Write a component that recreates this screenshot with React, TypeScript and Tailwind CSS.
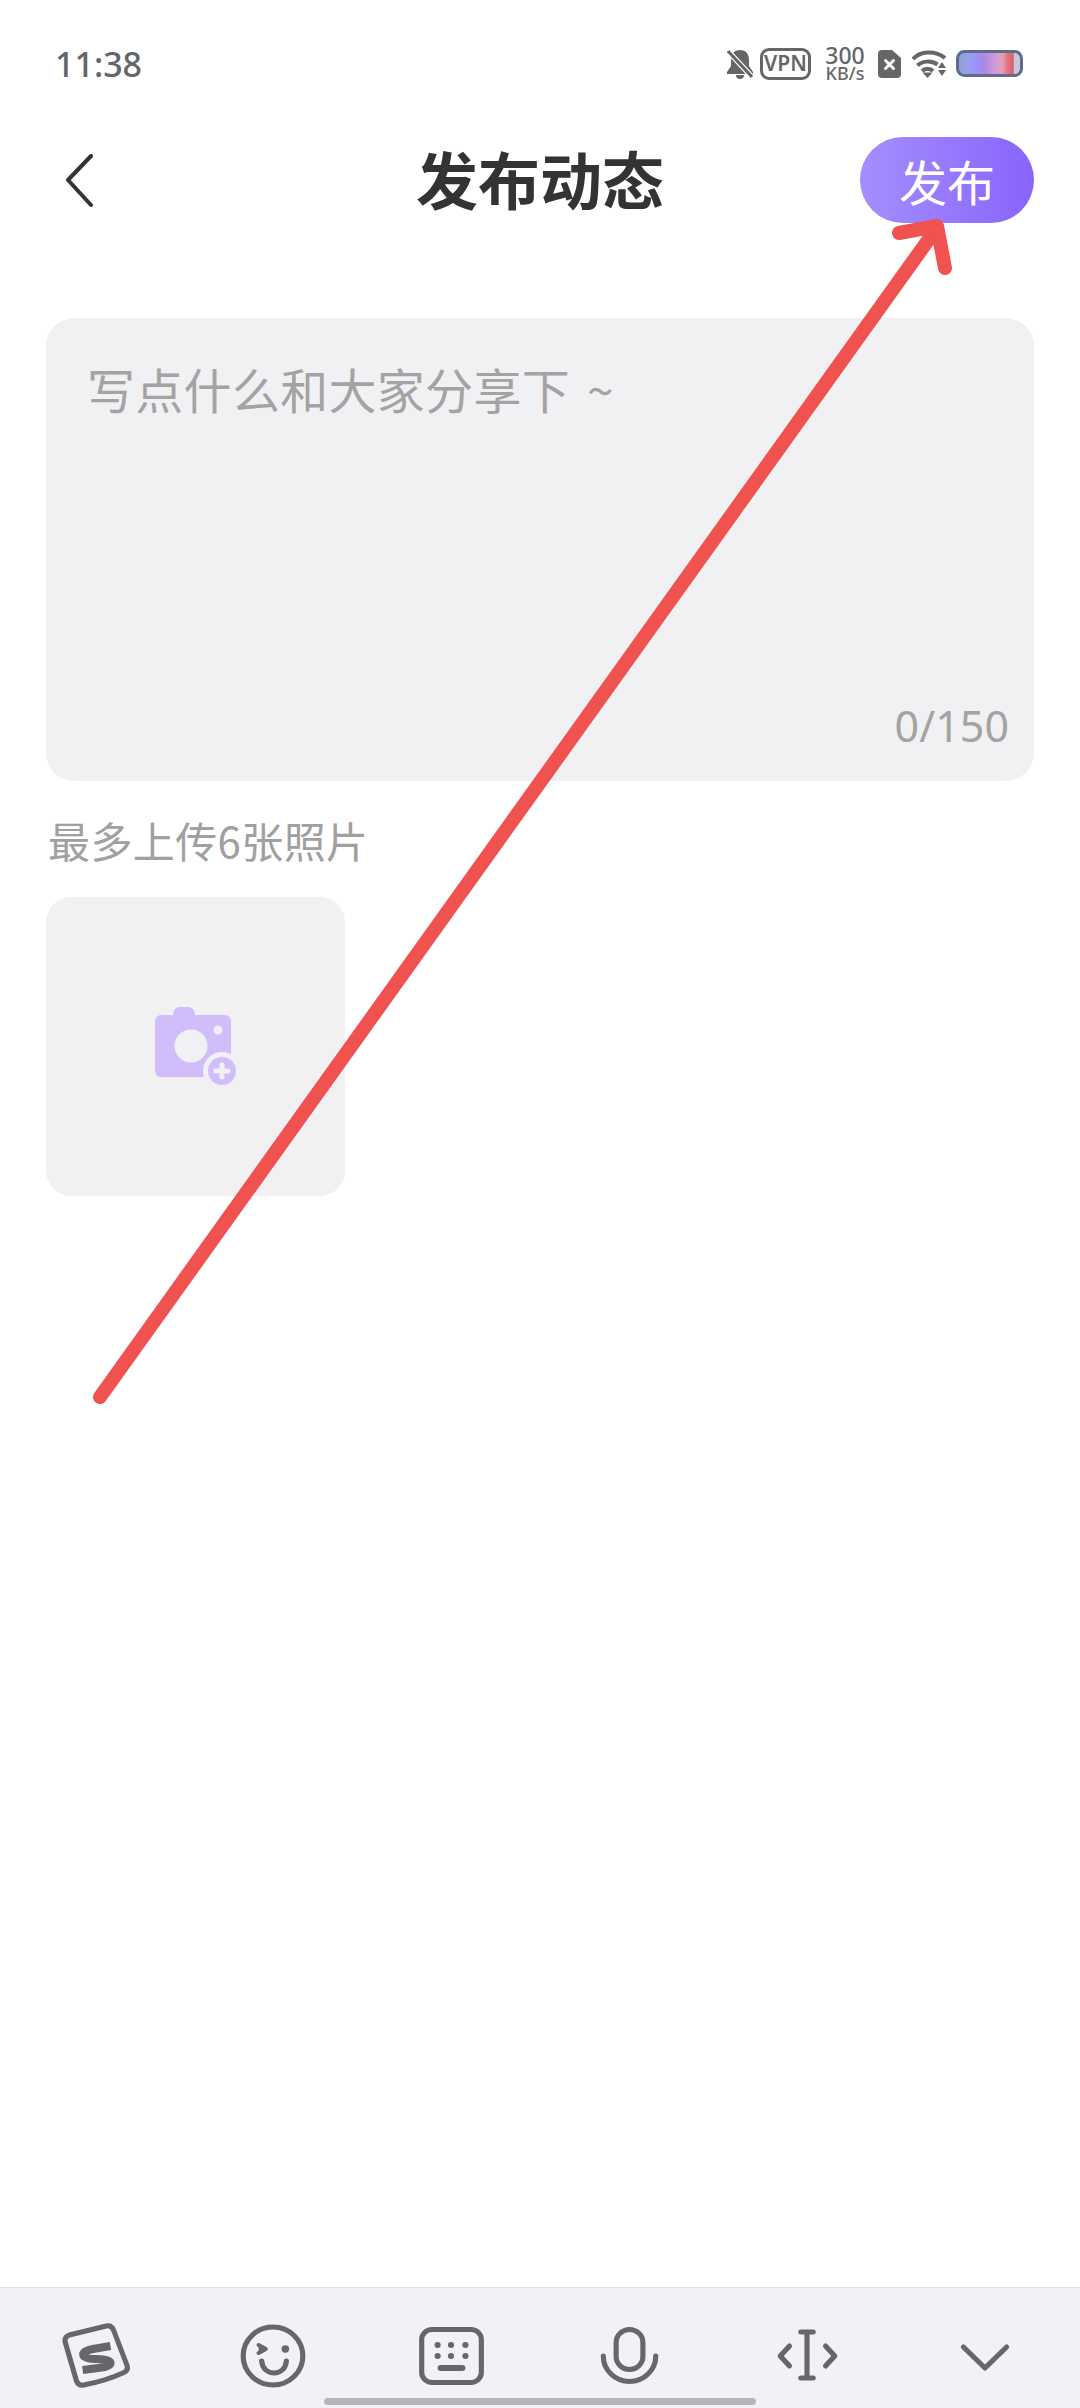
import React from 'react';

const CJK = "font-['Noto_Sans_CJK_SC','Noto_Sans',sans-serif]";

function BellOff() {
  return (
    <svg className="w-[26px] h-[30px]" viewBox="0 0 26 30" fill="#666">
      <path d="M13 1c-6 0-9 4-9 10v6l-4 6v2h26v-2l-4-6v-6c0-6-3-10-9-10z" />
      <path d="M9 26h8a4 4 0 0 1-8 0z" />
      <path d="M-1 0l26 28" stroke="#fff" strokeWidth="5.500" />
      <path d="M1 2l24 26" stroke="#666" strokeWidth="3" />
    </svg>
  );
}

function SimX() {
  return (
    <svg className="w-[23px] h-[28px]" viewBox="0 0 23 28">
      <path d="M4 0h10l9 8v16a4 4 0 0 1-4 4H4a4 4 0 0 1-4-4V4a4 4 0 0 1 4-4z" fill="#666" />
      <path d="M7.500 10.500l8 8M15.500 10.500l-8 8" stroke="#fff" strokeWidth="3" strokeLinecap="round" />
    </svg>
  );
}

function Wifi() {
  return (
    <svg className="w-[34px] h-[28px]" viewBox="0 0 34 28" fill="none">
      <path d="M1 9C8 1 23 0 33 8" stroke="#666" strokeWidth="4" />
      <path d="M5.500 15.500c5-5 14-5 20-1" stroke="#666" strokeWidth="4" />
      <path d="M10 21c3-3 8-3 11 0" stroke="#666" strokeWidth="4" />
      <path d="M10.500 22.500h10l-5 5.500z" fill="#666" />
      <path d="M30 12l4 6h-8zM26 20h8l-4 6z" fill="#666" />
    </svg>
  );
}

function Battery() {
  return (
    <svg className="w-[67px] h-[27px]" viewBox="0 0 67 27">
      <defs>
        <linearGradient id="batt" x1="0" y1="0" x2="1" y2="0">
          <stop offset="0" stopColor="#8f9fd6" />
          <stop offset="0.18" stopColor="#98a0e8" />
          <stop offset="0.26" stopColor="#9a96f8" />
          <stop offset="0.4" stopColor="#a688e4" />
          <stop offset="0.55" stopColor="#c997dc" />
          <stop offset="0.7" stopColor="#e2a0bc" />
          <stop offset="0.78" stopColor="#e2757f" />
          <stop offset="0.87" stopColor="#d8606e" />
          <stop offset="0.89" stopColor="#c9c6d8" />
          <stop offset="1" stopColor="#c4c8dc" />
        </linearGradient>
      </defs>
      <rect x="1.500" y="1.500" width="64" height="24" rx="7" fill="url(#batt)" stroke="#5f6a8c" strokeWidth="3" />
    </svg>
  );
}

function StatusBar() {
  return (
    <div className="h-[127px] flex items-center justify-between pl-[55px] pr-[57px] text-[#666] font-['Noto_Sans',sans-serif]">
      <span className="text-[34px] font-medium leading-none">11:38</span>
      <div className="flex items-center">
        <BellOff />
        <div className="ml-[7px] w-[51px] h-[32px] rounded-[9px] border-[3px] border-[#666] flex items-center justify-center text-[21px] font-semibold leading-none">VPN</div>
        <div className="ml-[15px] w-[38px] flex flex-col items-center font-medium">
          <span className="text-[23px] leading-[19px]">300</span>
          <span className="text-[18px] leading-[17px]">KB/s</span>
        </div>
        <div className="ml-[14px] flex"><SimX /></div>
        <div className="ml-[11px] flex"><Wifi /></div>
        <div className="ml-[10px] flex"><Battery /></div>
      </div>
    </div>
  );
}

function CameraPlus() {
  return (
    <svg className="w-[85px] h-[85px]" viewBox="153 1004 85 85" fill="#d2bdfb">
      <path d="M173 1015v-1a7 7 0 0 1 7-7h8a7 7 0 0 1 7 7v1h30a6 6 0 0 1 6 6v50a6 6 0 0 1-6 6h-64a6 6 0 0 1-6-6v-50a6 6 0 0 1 6-6z" />
      <circle cx="191" cy="1046" r="16.500" fill="#f1f1f4" />
      <circle cx="218" cy="1030" r="4.500" fill="#f1f1f4" />
      <circle cx="222" cy="1071" r="19" fill="#f1f1f4" />
      <circle cx="222" cy="1071" r="14" />
      <path d="M222 1065v12M216 1071h12" stroke="#f1f1f4" strokeWidth="5" strokeLinecap="round" />
    </svg>
  );
}

const iconProps = {
  className: 'w-[72px] h-[70px]',
  viewBox: '0 0 70 70',
  preserveAspectRatio: 'none',
  fill: 'none',
  stroke: '#66676c',
  strokeWidth: 5,
  strokeLinecap: 'round' as const,
  strokeLinejoin: 'round' as const,
};

const toolbarIcons = [
  <svg {...iconProps}>
    <path d="M10 14L46 5Q51 4 53 9L66 44Q68 50 62 52Q45 60 24 64Q19 65 17 60L6 21Q5 16 10 14Z" />
    <path d="M50 25L33 28Q22 30 24 35Q26 38 36 38Q50 38 50 42Q50 46 38 47L23 49" strokeWidth="8" strokeLinecap="butt" />
  </svg>,
  <svg {...iconProps}>
    <circle cx="35" cy="35" r="29" />
    <path d="M21 24l7 4-7 4" strokeWidth="4" fill="#66676c" />
    <circle cx="47" cy="28" r="3.700" fill="#66676c" stroke="none" />
    <path d="M24 40C25 56 47 56 48 40" />
  </svg>,
  <svg {...iconProps}>
    <rect x="6.500" y="8.500" width="58" height="53" rx="10" />
    <g fill="#66676c" stroke="none">
      <circle cx="22" cy="24" r="3" /><circle cx="35" cy="24" r="3" /><circle cx="49" cy="24" r="3" />
      <circle cx="22" cy="35" r="3" /><circle cx="35" cy="35" r="3" /><circle cx="49" cy="35" r="3" />
    </g>
    <path d="M25 47h21" strokeWidth="6" />
  </svg>,
  <svg {...iconProps}>
    <rect x="22.500" y="8.500" width="26" height="40" rx="13" />
    <path d="M10 35a25.500 25.500 0 0 0 51 0" />
  </svg>,
  <svg {...iconProps}>
    <path d="M35 11v46M29 11h12M29 57h12" />
    <path d="M18 25l-9 10 9 10M53 25l9 10-9 10" />
  </svg>,
  <svg {...iconProps}>
    <path d="M14 26l21 21 21-21" />
  </svg>,
];

function Toolbar() {
  return (
    <div className="mt-auto h-[121px] border-t border-[#e0e1e3] bg-[#f1f2f6] pt-[33px] px-[6px] flex items-start">
      {toolbarIcons.map((icon, i) => (
        <div key={i} className="flex-1 flex justify-center">
          {icon}
        </div>
      ))}
    </div>
  );
}

export default function App() {
  return (
    <div className={`relative w-[1080px] h-[2408px] bg-white overflow-hidden flex flex-col ${CJK}`}>
      <StatusBar />

      <div className="h-[106px] px-[46px] grid grid-cols-[174px_1fr_174px] items-center">
        <svg className="ml-[20px] w-[27px] h-[53px]" viewBox="0 0 27 53" fill="none" stroke="#333" strokeWidth="4" strokeLinecap="round" strokeLinejoin="round">
          <path d="M25 2L2 26l23 25" />
        </svg>
        <h1 className="text-center text-[62px] font-bold leading-none text-[#333] -mt-[4px]">发布动态</h1>
        <button className="h-[86px] rounded-full bg-gradient-to-r from-[#a48eff] to-[#8a63fb] text-white text-[48px] leading-none">发布</button>
      </div>

      <div className="mt-[85px] mx-[46px] h-[463px] rounded-[28px] bg-[#f1f1f4] flex flex-col justify-between pt-[38px] pl-[41px] pr-[25px] pb-[30px]">
        <p className="text-[48px] leading-[64px] tracking-[0.3px] [word-spacing:6px] text-[#a3a3a3]">写点什么和大家分享下 ~</p>
        <p className="text-right text-[43px] leading-[50px] text-[#a3a3a3] font-['Noto_Sans',sans-serif]">0/150</p>
      </div>

      <p className="mt-[31px] ml-[48px] text-[42px] leading-[56px] tracking-[0.4px] text-[#a0a0a0]">最多上传6张照片</p>

      <div className="mt-[29px] ml-[46px] w-[299px] h-[299px] rounded-[25px] bg-[#f1f1f4] flex items-center justify-center">
        <CameraPlus />
      </div>

      <Toolbar />

      {/* annotation arrow drawn over the page */}
      <svg className="absolute inset-0 w-[1080px] h-[2408px] pointer-events-none" viewBox="0 0 1080 2408" fill="none" stroke="#f0524f" strokeWidth="14" strokeLinecap="round" strokeLinejoin="round">
        <path d="M100 1397L934 232" />
        <path d="M899 233L937 226L945 268" />
      </svg>

      <div className="absolute left-[324px] top-[2398px] w-[432px] h-[7px] rounded-full bg-[#b5b6bb]" />
    </div>
  );
}
